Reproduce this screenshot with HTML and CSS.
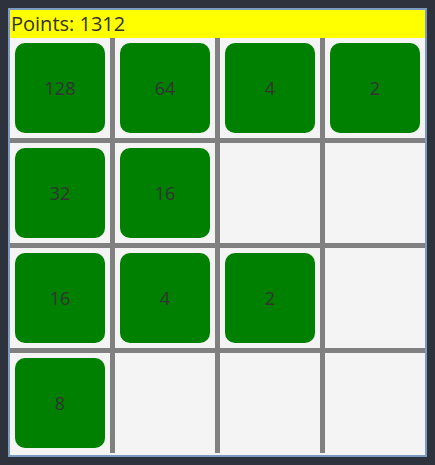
FILE: index.html
```html
<!DOCTYPE html>
<html>
<head>
<meta charset="utf-8">
<link rel="stylesheet" href="styles.css">
</head>
<body>
<div class="frame">
  <div class="header">Points: 1312</div>
  <div class="board">
    <div class="cell"><div class="tile">128</div></div>
    <div class="cell"><div class="tile">64</div></div>
    <div class="cell"><div class="tile">4</div></div>
    <div class="cell"><div class="tile">2</div></div>
    <div class="cell"><div class="tile">32</div></div>
    <div class="cell"><div class="tile">16</div></div>
    <div class="cell"></div>
    <div class="cell"></div>
    <div class="cell"><div class="tile">16</div></div>
    <div class="cell"><div class="tile">4</div></div>
    <div class="cell"><div class="tile">2</div></div>
    <div class="cell"></div>
    <div class="cell"><div class="tile">8</div></div>
    <div class="cell"></div>
    <div class="cell"></div>
    <div class="cell"></div>
  </div>
</div>
</body>
</html>
```
FILE: styles.css
```css
html, body {
  background: #2e323c;
}
body {
  margin: 8px;
  font-family: "Open Sans", sans-serif;
}
.frame {
  border: 2px solid #7d9bc0;
  background: #f4f4f4;
  padding-bottom: 2px;
}
.header {
  background: #ffff00;
  height: 28px;
  line-height: 28px;
  font-size: 20px;
  color: #333333;
  padding-left: 1px;
  white-space: nowrap;
}
.board {
  display: grid;
  grid-template-columns: repeat(4, 100px);
  grid-auto-rows: 100px;
  gap: 5px;
  background: #808080;
  width: 415px;
}
.cell {
  background: #f4f4f4;
  padding: 5px;
  display: flex;
}
.tile {
  flex: 1;
  background: #008000;
  border-radius: 10px;
  display: flex;
  align-items: center;
  justify-content: center;
  font-size: 18px;
  color: #333333;
}
```
